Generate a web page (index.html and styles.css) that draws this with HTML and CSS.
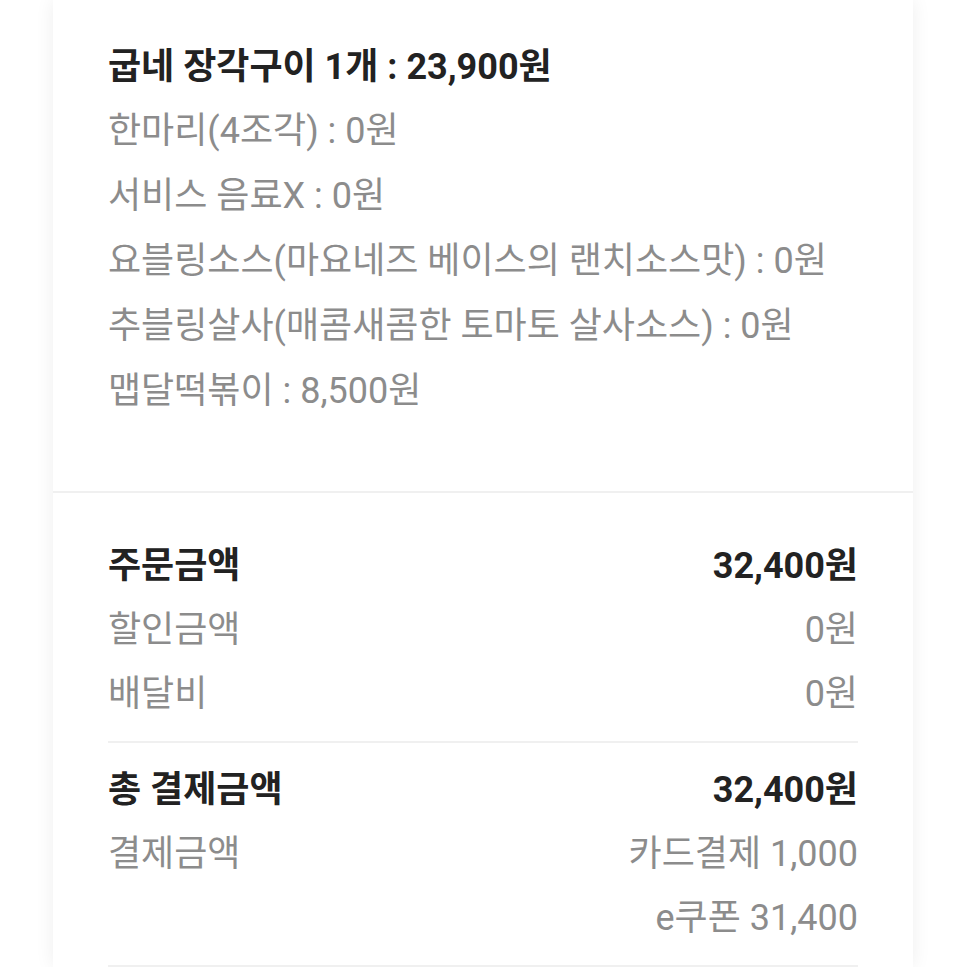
FILE: index.html
```html
<!DOCTYPE html>
<html lang="ko">
<head>
    <meta charset="UTF-8">
    <meta name="viewport" content="width=device-width, initial-scale=1.0">
    <title>주문내역</title>
    <link rel="stylesheet" href="styles.css">
</head>
<body>
    <div class="card">
        <div class="menu-section">
            <div class="menu-title">굽네 장각구이 1개 : 23,900원</div>
            <div class="menu-option">한마리(4조각) : 0원</div>
            <div class="menu-option">서비스 음료X : 0원</div>
            <div class="menu-option">요블링소스(마요네즈 베이스의 랜치소스맛) : 0원</div>
            <div class="menu-option">추블링살사(매콤새콤한 토마토 살사소스) : 0원</div>
            <div class="menu-option">맵달떡볶이 : 8,500원</div>
        </div>

        <div class="price-section">
            <div class="price-row strong">
                <span>주문금액</span>
                <span>32,400원</span>
            </div>
            <div class="price-row">
                <span>할인금액</span>
                <span>0원</span>
            </div>
            <div class="price-row">
                <span>배달비</span>
                <span>0원</span>
            </div>
            <div class="divider"></div>
            <div class="price-row strong">
                <span>총 결제금액</span>
                <span>32,400원</span>
            </div>
            <div class="price-row">
                <span>결제금액</span>
                <div class="pay-list">
                    <span>카드결제 1,000</span>
                    <span>e쿠폰 31,400</span>
                </div>
            </div>
            <div class="divider"></div>
        </div>
    </div>
</body>
</html>
```

FILE: styles.css
```css
body {
    margin: 0;
    padding: 0;
    background-color: #ffffff;
    font-family: Roboto, "Noto Sans CJK KR", sans-serif;
    overflow: hidden;
}

.card {
    width: 860px;
    margin: 0 auto;
    background: white;
    box-shadow: 0 0 18px rgba(0, 0, 0, 0.07);
    min-height: 967px;
}

.menu-section {
    padding: 36px 55px 67px;
    border-bottom: 2px solid #f0f0f0;
}

.menu-title {
    font-size: 36px;
    font-weight: bold;
    color: #222;
    line-height: 63px;
}

.menu-option {
    font-size: 36px;
    color: #8c8c8c;
    line-height: 65px;
}

.price-section {
    padding: 41px 55px 0;
}

.price-row {
    display: flex;
    justify-content: space-between;
    align-items: flex-start;
    font-size: 36px;
    color: #8c8c8c;
    line-height: 64px;
}

.price-row.strong {
    font-weight: bold;
    color: #222;
}

.pay-list {
    display: flex;
    flex-direction: column;
    align-items: flex-end;
}

.divider {
    height: 2px;
    background: #f0f0f0;
    margin: 15px 0;
}
```
